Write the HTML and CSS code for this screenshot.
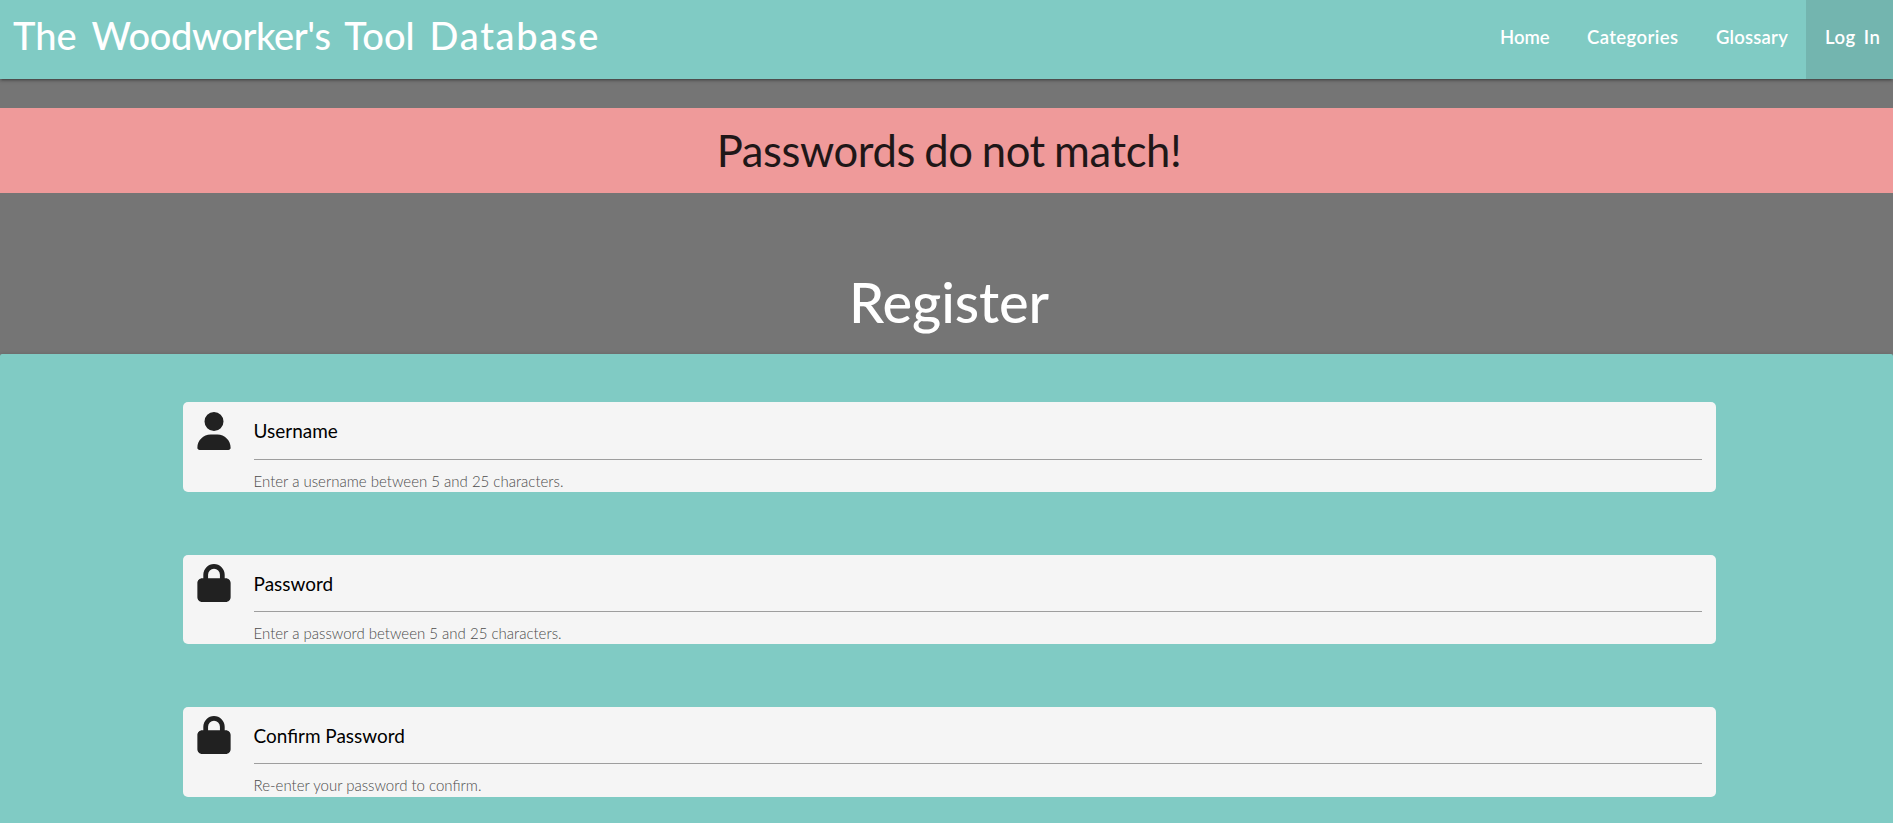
FILE: index.html
```html
<!DOCTYPE html>
<html lang="en">
<head>
<meta charset="utf-8">
<title>The Woodworker's Tool Database</title>
<link rel="stylesheet" href="styles.css">
</head>
<body>
<nav class="navbar">
  <a class="brand" href="#">The <span class="tight">Woodworker's</span> Tool <span class="wide">Database</span></a>
  <ul class="links">
    <li><a class="home" href="#">Home</a></li>
    <li><a class="categories" href="#">Categories</a></li>
    <li><a class="glossary" href="#">Glossary</a></li>
    <li class="active"><a class="login" href="#">Log In</a></li>
  </ul>
</nav>
<h3 class="flash">Passwords do not match!</h3>
<h1 class="title">Register</h1>
<form class="card">
  <div class="field">
    <svg class="icon" viewBox="0 0 448 512"><path d="M224 256A128 128 0 1 0 224 0a128 128 0 1 0 0 256zM178 304C80 304 0 384 0 482c0 17 13 30 30 30h388c17 0 30-13 30-30 0-98-80-178-178-178z"/></svg>
    <div class="body">
      <label class="label">Username</label>
      <span class="helper">Enter a username between 5 and 25 characters.</span>
    </div>
  </div>
  <div class="field">
    <svg class="icon" viewBox="0 0 448 512"><path d="M144 144v48h160v-48a80 80 0 0 0-160 0zM80 192v-48a144 144 0 0 1 288 0v48h16c35 0 64 29 64 64v192c0 35-29 64-64 64H64c-35 0-64-29-64-64V256c0-35 29-64 64-64z"/></svg>
    <div class="body">
      <label class="label">Password</label>
      <span class="helper">Enter a password between 5 and 25 characters.</span>
    </div>
  </div>
  <div class="field">
    <svg class="icon" viewBox="0 0 448 512"><path d="M144 144v48h160v-48a80 80 0 0 0-160 0zM80 192v-48a144 144 0 0 1 288 0v48h16c35 0 64 29 64 64v192c0 35-29 64-64 64H64c-35 0-64-29-64-64V256c0-35 29-64 64-64z"/></svg>
    <div class="body">
      <label class="label">Confirm Password</label>
      <span class="helper">Re-enter your password to confirm.</span>
    </div>
  </div>
</form>
</body>
</html>
```
FILE: styles.css
```css
* { box-sizing: border-box; }
body {
  margin: 0;
  background: #757575;
  font-family: Lato, sans-serif;
  color: #212121;
}
.navbar {
  display: flex;
  justify-content: space-between;
  height: 79px;
  padding-left: 13px;
  background: #80cbc4;
  box-shadow: 0 2px 2px 0 rgba(0,0,0,.14), 0 3px 1px -2px rgba(0,0,0,.12), 0 1px 5px 0 rgba(0,0,0,.2);
}
.navbar a { color: #fff; text-decoration: none; white-space: nowrap; }
.brand { font-size: 38px; font-weight: 500; line-height: 71px; word-spacing: 5.4px; }
.tight { letter-spacing: -.4px; }
.wide { letter-spacing: 1.7px; }
.links { display: flex; margin: 0; padding: 0; list-style: none; }
.links a { display: block; padding: 0 19px; font-size: 18.5px; font-weight: 600; line-height: 74px; }
.home { width: 87px; }
.categories { width: 129px; letter-spacing: .4px; }
.glossary { width: 109px; letter-spacing: .2px; }
.login { width: 87px; letter-spacing: .5px; word-spacing: 3px; }
.active { background: #73b5af; }
.flash {
  margin: 29px 0 0;
  padding-left: 5px;
  height: 85px;
  background: #ef9a9a;
  color: #1f1718;
  font-size: 43.6px;
  font-weight: 400;
  letter-spacing: -.4px;
  word-spacing: -1.5px;
  line-height: 85px;
  text-align: center;
}
.title {
  margin: 76px 0 0;
  padding-left: 5px;
  height: 85px;
  color: #fff;
  font-size: 56px;
  font-weight: 500;
  letter-spacing: -.1px;
  line-height: 65px;
  text-align: center;
}
.card {
  display: flex;
  flex-direction: column;
  gap: 62.8px;
  height: 469px;
  padding: 48.4px 177px 0 183px;
  border-radius: 2px 2px 0 0;
  background: #80cbc4;
  box-shadow: 0 2px 2px 0 rgba(0,0,0,.14), 0 3px 1px -2px rgba(0,0,0,.12), 0 1px 5px 0 rgba(0,0,0,.2);
}
.field {
  display: flex;
  flex: none;
  gap: 22.6px;
  height: 89.6px;
  padding: 0 14px;
  border-radius: 5px;
  background: #f5f5f5;
}
.icon { flex: none; width: 34px; height: 38px; margin-top: 9.2px; fill: #212121; }
.field:first-child .icon { margin-top: 9.8px; }
.body { flex: 1; }
.label {
  display: block;
  height: 57.2px;
  border-bottom: 1px solid #9e9e9e;
  color: #000;
  font-size: 18.95px;
  line-height: 58px;
}
.helper { display: block; color: #4c4c4c; font-size: 15px; font-weight: 300; line-height: 43.4px; }
```
